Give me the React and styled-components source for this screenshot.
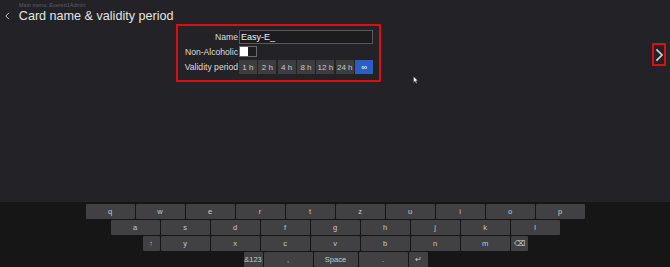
import React from 'react';
import styled, { createGlobalStyle } from 'styled-components';

const GlobalStyle = createGlobalStyle`
    html, body {
        margin: 0;
        padding: 0;
        background: #232327;
        overflow: hidden;
    }
    * {
        box-sizing: border-box;
    }
`

const Page = styled.div`
    position: relative;
    display: flex;
    flex-direction: column;
    width: 670px;
    height: 267px;
    background: #232327;
    font-family: "Liberation Sans", Arial, sans-serif;
    color: #e2e2e2;
`

const Header = styled.div`
    display: flex;
    flex-direction: column;
    padding: 2px 0 0 5px;
    height: 24px;
`

const Breadcrumb = styled.div`
    font-size: 5.5px;
    line-height: 6px;
    color: #5c5c62;
    margin-left: 14px;
`

const TitleRow = styled.div`
    display: flex;
    align-items: center;
    gap: 9px;
    height: 16px;
`

const Title = styled.div`
    font-size: 12.6px;
    line-height: 16px;
    color: #e4e4e4;
`

const Main = styled.div`
    flex: 1;
    display: flex;
    align-items: flex-start;
    padding-left: 176px;
    padding-right: 4px;
`

const FormBox = styled.div`
    width: 205px;
    height: 58px;
    border: 2px solid #e00d0d;
    padding: 4px 6px 0 0;
    display: grid;
    grid-template-columns: 60px 134px;
    grid-template-rows: 14px 11px 14px;
    column-gap: 1px;
    row-gap: 2px;
    align-items: center;
`

const Label = styled.div`
    font-size: 8.6px;
    text-align: right;
    color: #dcdcdc;
    white-space: nowrap;
    margin-top: ${p => p.$shift || 0}px;
`

const TextInput = styled.div`
    height: 14px;
    border: 1px solid #5a5a5e;
    background: #1c1c1f;
    font-size: 9px;
    line-height: 12px;
    padding-left: 1px;
    color: #f0f0f0;
`

const Toggle = styled.div`
    display: flex;
    width: 18px;
    height: 11px;
    border: 1px solid #6a6a6e;
    background: #1e1e21;

    &::before {
        content: '';
        width: 8px;
        background: #ffffff;
    }
`

const Periods = styled.div`
    display: flex;
    gap: 1.5px;
    height: 14px;
    margin-top: ${p => p.$shift || 0}px;
`

const Period = styled.div`
    flex: 1;
    display: flex;
    align-items: center;
    justify-content: center;
    font-size: 8px;
    color: ${p => (p.$active ? '#ffffff' : '#c9c9c9')};
    background: ${p => (p.$active ? '#2d5ec2' : '#3d3d40')};
`

const Spacer = styled.div`
    flex: 1;
`

const NextButton = styled.div`
    margin-top: 19px;
    width: 14px;
    height: 23px;
    border: 2px solid #e00d0d;
    display: flex;
    align-items: center;
    justify-content: center;
`

const Keyboard = styled.div`
    height: 65px;
    background: #161616;
    padding-top: 2px;
    display: flex;
    flex-direction: column;
    gap: 1px;
`

const KeyRow = styled.div`
    display: flex;
    justify-content: center;
    gap: 1px;
    padding-left: ${p => p.$offset || 0}px;
`

const Key = styled.div`
    width: ${p => p.$w || 49}px;
    height: 15px;
    background: #414143;
    color: #c8c8c8;
    font-size: 7.5px;
    display: flex;
    align-items: center;
    justify-content: center;
    border-radius: 1px;
`

const Pointer = styled.svg`
    position: absolute;
    left: 413px;
    top: 76px;
`

const periods = ['1 h', '2 h', '4 h', '8 h', '12 h', '24 h', '∞'];

const rows = [
    'qwertzuiop'.split(''),
    'asdfghjkl'.split(''),
];

const Chevron = ({ dir, color, size }) => (
    <svg width={size * 0.6} height={size} viewBox="0 0 6 10">
        <path
            d={dir === 'left' ? 'M5 1 L1 5 L5 9' : 'M1 1 L5 5 L1 9'}
            fill="none"
            stroke={color}
            strokeWidth="1.2"
        />
    </svg>
);

export default function App() {
    return (
        <Page>
            <GlobalStyle />
            <Header>
                <Breadcrumb>Main menu: Everett1Admin</Breadcrumb>
                <TitleRow>
                    <Chevron dir="left" color="#d0d0d0" size={8} />
                    <Title>Card name &amp; validity period</Title>
                </TitleRow>
            </Header>
            <Main>
                <FormBox>
                    <Label>Name</Label>
                    <TextInput>Easy-E_</TextInput>
                    <Label>Non-Alcoholic</Label>
                    <Toggle />
                    <Label $shift={2}>Validity period</Label>
                    <Periods $shift={2}>
                        {periods.map(p => (
                            <Period key={p} $active={p === '∞'}>{p}</Period>
                        ))}
                    </Periods>
                </FormBox>
                <Spacer />
                <NextButton>
                    <Chevron dir="right" color="#cfcfcf" size={14} />
                </NextButton>
            </Main>
            <Keyboard>
                <KeyRow>
                    {rows[0].map(k => <Key key={k}>{k}</Key>)}
                </KeyRow>
                <KeyRow>
                    {rows[1].map(k => <Key key={k}>{k}</Key>)}
                </KeyRow>
                <KeyRow>
                    <Key $w={17}>↑</Key>
                    {'yxcvbnm'.split('').map(k => <Key key={k}>{k}</Key>)}
                    <Key $w={17}>⌫</Key>
                </KeyRow>
                <KeyRow $offset={1}>
                    <Key $w={19}>&amp;123</Key>
                    <Key>,</Key>
                    <Key $w={44}>Space</Key>
                    <Key>.</Key>
                    <Key $w={19}>↵</Key>
                </KeyRow>
            </Keyboard>
            <Pointer width="6" height="8" viewBox="0 0 6 8">
                <path d="M0.5 0.5 L0.5 6.5 L2 5.2 L3.2 7.5 L4 7 L3 4.8 L5 4.8 Z" fill="#ffffff" stroke="#333" strokeWidth="0.5" />
            </Pointer>
        </Page>
    );
}
